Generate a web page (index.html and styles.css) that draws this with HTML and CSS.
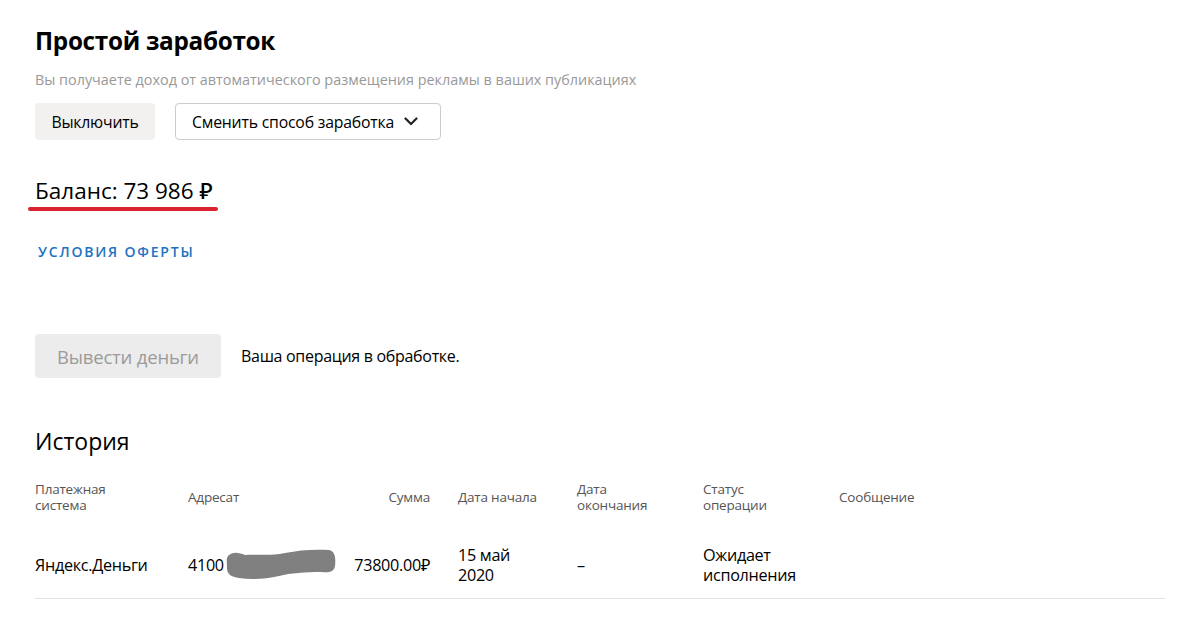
FILE: index.html
```html
<!DOCTYPE html>
<html lang="ru">

<head>
    <meta charset="UTF-8">
    <title>Простой заработок</title>
    <link rel="stylesheet" href="styles.css">
</head>

<body>
    <div class="page">
        <h1 class="title">Простой заработок</h1>
        <p class="subtitle">Вы получаете доход от автоматического размещения рекламы в ваших публикациях</p>

        <div class="actions">
            <button class="btn btn-grey">Выключить</button>
            <button class="btn btn-outline">Сменить способ заработка
                <svg class="chevron" width="14" height="9" viewBox="0 0 14 9"><path d="M1.5 1.5 L7 7 L12.5 1.5" fill="none" stroke="#222" stroke-width="2.2" stroke-linecap="round" stroke-linejoin="round"/></svg>
            </button>
        </div>

        <div class="balance">
            <span class="balance-text">Баланс: 73 986 ₽</span>
        </div>

        <a class="offer-link" href="#">Условия оферты</a>

        <div class="withdraw">
            <button class="btn btn-disabled">Вывести деньги</button>
            <span class="withdraw-note">Ваша операция в обработке.</span>
        </div>

        <h2 class="history-title">История</h2>

        <div class="history">
            <div class="row head">
                <div>Платежная<br>система</div>
                <div>Адресат</div>
                <div class="sum">Сумма</div>
                <div>Дата начала</div>
                <div>Дата<br>окончания</div>
                <div>Статус<br>операции</div>
                <div>Сообщение</div>
            </div>
            <div class="row item">
                <div>Яндекс.Деньги</div>
                <div class="account">4100<svg class="blur" width="112" height="32" viewBox="0 0 112 32"><path d="M3 8 C8 3 14 5 20 7 C34 6 46 8 60 5 C74 2 90 1 104 2 C110 3 111 10 110 18 C109 24 104 25 96 24 C80 24 66 25 54 28 C40 31 26 32 14 30 C6 29 2 26 2 20 C2 14 1 11 3 8 Z" fill="#808080"/></svg></div>
                <div class="sum">73800.00₽</div>
                <div>15 май<br>2020</div>
                <div>–</div>
                <div>Ожидает<br>исполнения</div>
                <div></div>
            </div>
        </div>
    </div>
</body>

</html>
```

FILE: styles.css
```css
body {
    margin: 0;
    padding: 0;
    background: #fff;
    color: #000;
    font-family: 'Open Sans', 'Noto Sans', sans-serif;
}

.page {
    padding: 22px 35px 0 35px;
}

.title {
    margin: 0;
    font-size: 24.3px;
    font-weight: 700;
    letter-spacing: -0.3px;
    line-height: 38px;
}

.subtitle {
    margin: 10px 0 0 0;
    font-size: 14.4px;
    color: #999;
    line-height: 20px;
}

.actions {
    display: flex;
    gap: 20px;
    margin-top: 13px;
}

.btn {
    font-family: inherit;
    border: none;
    border-radius: 4px;
    cursor: pointer;
    height: 37px;
    padding: 0 16px;
    font-size: 15.8px;
    letter-spacing: -0.2px;
    color: #000;
}

.btn-grey {
    background: #f2f1ef;
    width: 120px;
}

.btn-outline {
    background: #fff;
    border: 1px solid #ccc;
    width: 266px;
    display: flex;
    align-items: center;
    gap: 8px;
    padding: 0 14px 0 16px;
}

.chevron {
    margin-left: 2px;
}

.balance {
    margin-top: 37px;
}

.balance-text {
    display: inline-block;
    position: relative;
    font-size: 22.5px;
    font-weight: 500;
    line-height: 28px;
}

.balance-text::after {
    content: '';
    position: absolute;
    left: -7px;
    right: -5px;
    bottom: -6px;
    height: 4px;
    border-radius: 2px;
    background: #d9232e;
}

.offer-link {
    display: block;
    margin-top: 37px;
    margin-left: 3px;
    font-size: 14px;
    font-weight: 600;
    letter-spacing: 1.8px;
    text-transform: uppercase;
    color: #2272c3;
    text-decoration: none;
    line-height: 20px;
}

.withdraw {
    display: flex;
    align-items: center;
    gap: 20px;
    margin-top: 72px;
}

.btn-disabled {
    background: #ececec;
    color: #9b9b9b;
    height: 44px;
    width: 186px;
    font-size: 18.5px;
    padding: 0;
}

.withdraw-note {
    font-size: 16px;
    letter-spacing: -0.3px;
}

.history-title {
    margin: 47px 0 0 0;
    font-size: 23px;
    font-weight: 400;
    line-height: 32px;
}

.history {
    width: 1130px;
    margin-top: 24px;
}

.row {
    display: grid;
    grid-template-columns: 153px 150px 120px 119px 126px 136px 1fr;
}

.row.head {
    font-size: 13.5px;
    color: #555;
    line-height: 16px;
    align-items: center;
    letter-spacing: -0.2px;
}

.row .sum {
    text-align: right;
    padding-right: 28px;
}

.row.item {
    margin-top: 32px;
    font-size: 16.2px;
    line-height: 20px;
    letter-spacing: -0.3px;
    align-items: center;
    padding-bottom: 13px;
    border-bottom: 1px solid #e2e2e2;
    min-height: 40px;
}

.account {
    display: flex;
    align-items: center;
}

.blur {
    margin-left: 1px;
    margin-top: -3px;
}
```
